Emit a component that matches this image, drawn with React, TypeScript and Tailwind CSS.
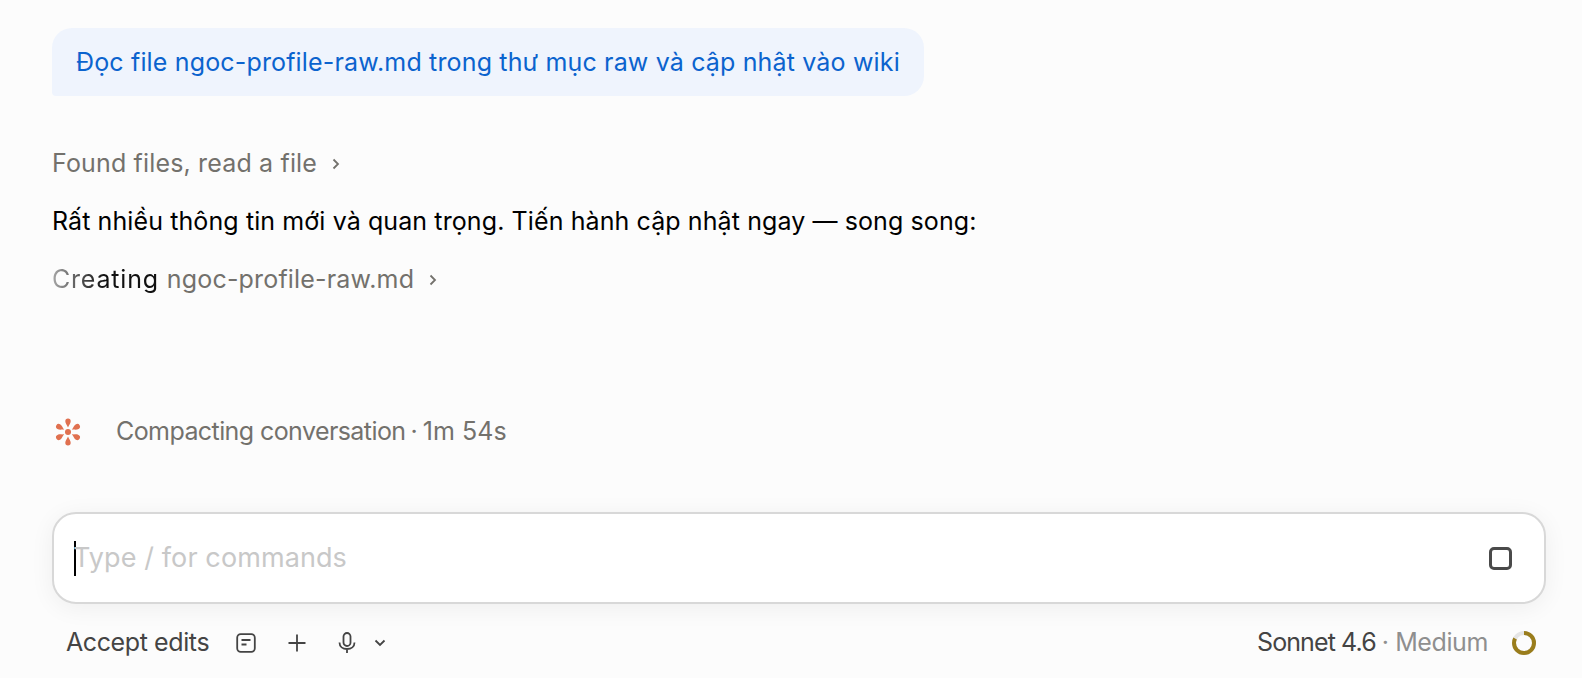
const petals = [0, 60, 120, 180, 240, 300];

function Chevron() {
  return (
    <svg className="ml-[14px]" width="10" height="14" viewBox="0 0 10 14" fill="none" stroke="currentColor" strokeWidth="1.8">
      <path d="M2.5 2.5 7 7l-4.5 4.5" />
    </svg>
  );
}

export default function App() {
  return (
    <div className="h-[678px] w-full overflow-hidden bg-[#fcfcfc] px-[52px] pt-[28px] font-['Inter',sans-serif] text-[25px]">
      <div className="flex h-[68px] w-[872px] items-center rounded-[20px] rounded-bl-[4px] bg-[#eff4fd] pl-[24px] pt-[2px] tracking-[0.16px] text-[#0b63ce]">
        Đọc file ngoc-profile-raw.md trong thư mục raw và cập nhật vào wiki
      </div>

      <div className="mt-[48px] flex h-[38px] items-center pt-[2px] tracking-[0.16px] text-[#73716c]">
        Found files, read a file
        <Chevron />
      </div>

      <div className="mt-[20px] flex h-[38px] items-center pt-[2px] tracking-[0.1px] text-black">
        Rất nhiều thông tin mới và quan trọng. Tiến hành cập nhật ngay — song song:
      </div>

      <div className="mt-[20px] flex h-[38px] items-center pt-[2px] tracking-[0.17px] text-[#73716c]">
        <span className="bg-gradient-to-r from-[#a8a8a8] via-[#111111] to-[#111111] bg-clip-text tracking-[0.8px] text-transparent">
          Creating
        </span>
        <span className="ml-[8px]">ngoc-profile-raw.md</span>
        <Chevron />
      </div>

      <div className="mt-[113px] flex h-[38px] items-center pt-[3px] text-[#73716c]">
        <svg className="ml-[2px] mr-[34px]" width="28" height="30" viewBox="0 0 28 30" fill="#e0704f">
          <circle cx="14" cy="15" r="3" />
          {petals.map((angle) => (
            <path
              key={angle}
              d="M14 10.5C13 8 11.3 6.5 11.3 4.3a2.7 2.7 0 0 1 5.4 0C16.7 6.5 15 8 14 10.5Z"
              transform={`rotate(${angle} 14 15)`}
            />
          ))}
        </svg>
        <span className="tracking-[-0.58px]">Compacting conversation</span>
        <span className="mx-[5px]">·</span>
        <span className="tracking-[0.05px]">1m 54s</span>
      </div>

      <div className="mt-[63px] flex h-[92px] w-[1494px] items-center justify-between rounded-[24px] border-2 border-[#d8d8d8] bg-white pl-[20px] pr-[32px] shadow-[0_4px_24px_rgba(0,0,0,0.06)]">
        <div className="flex items-center">
          <span className="h-[35px] w-[2px] bg-black" />
          <span className="ml-[-3px] text-[27px] tracking-[0.1px] text-[#c8c8c8]">Type / for commands</span>
        </div>
        <span className="h-[23px] w-[23px] rounded-[5px] border-[3px] border-[#4a4a4a]" />
      </div>

      <div className="mt-[20px] flex h-[38px] w-[1494px] items-center justify-between pl-[14px] pr-[10px] text-[#444444]">
        <div className="flex items-center">
          <span className="tracking-[-0.4px]">Accept edits</span>
          <svg className="ml-[27px]" width="20" height="20" viewBox="0 0 20 20" fill="none" stroke="currentColor" strokeWidth="1.8">
            <rect x="1.2" y="1.2" width="17.6" height="17.6" rx="3.5" />
            <path d="M5.5 7h9M5.5 11.5h5" />
          </svg>
          <svg className="ml-[31px]" width="20" height="20" viewBox="0 0 20 20" fill="none" stroke="currentColor" strokeWidth="1.8">
            <path d="M10 1.5v17M1.5 10h17" />
          </svg>
          <svg className="ml-[31px]" width="18" height="22" viewBox="0 0 18 22" fill="none" stroke="currentColor" strokeWidth="1.8">
            <rect x="5.5" y="1" width="7" height="13" rx="3.5" />
            <path d="M1.5 10.5c0 4.2 3.3 6.5 7.5 6.5s7.5-2.3 7.5-6.5M9 17v4" />
          </svg>
          <svg className="ml-[18px]" width="12" height="8" viewBox="0 0 12 8" fill="none" stroke="currentColor" strokeWidth="1.8">
            <path d="M1.5 1.5 6 6l4.5-4.5" />
          </svg>
        </div>
        <div className="flex items-center">
          <span className="tracking-[-0.9px]">Sonnet 4.6</span>
          <span className="ml-[6px] tracking-[-0.4px] text-[#8f8f8f]">· Medium</span>
          <svg className="ml-[24px]" width="24" height="24" viewBox="0 0 24 24" fill="none" strokeWidth="4">
            <circle cx="12" cy="12" r="10" stroke="#e5e5e5" />
            <circle cx="12" cy="12" r="10" stroke="#9a7d1c" strokeDasharray="51.5 63" transform="rotate(-90 12 12)" />
          </svg>
        </div>
      </div>
    </div>
  );
}
